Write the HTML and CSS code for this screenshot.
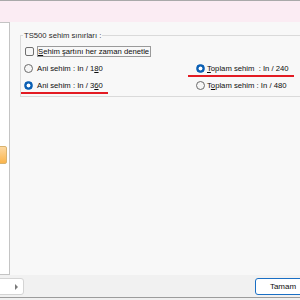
FILE: index.html
```html
<!DOCTYPE html>
<html lang="tr">

<head>
    <meta charset="UTF-8">
    <meta name="viewport" content="width=device-width, initial-scale=1.0">
    <title>TS500 sehim sınırları</title>
    <link rel="stylesheet" href="styles.css">
</head>

<body>

    <div class="top-line"></div>
    <div class="title-band"></div>

    <div class="main">
        <div class="side-panel">
            <div class="side-button"></div>
        </div>

        <div class="content">
            <!-- Deflection limits group -->
            <fieldset class="group">
                <legend>TS500 sehim sınırları :</legend>
                <div class="options">
                    <label class="check-row">
                        <span class="checkbox"></span>
                        <span class="focus-box"><u>S</u>ehim şartını her zaman denetle</span>
                    </label>
                    <label class="option">
                        <span class="radio"></span>
                        <span>Ani sehim : In / 1<u>8</u>0</span>
                    </label>
                    <label class="option right marked mark-right">
                        <span class="radio checked"></span>
                        <span><u>T</u>oplam sehim&nbsp; : In / 240</span>
                    </label>
                    <label class="option marked mark-left">
                        <span class="radio checked"></span>
                        <span>Ani sehim : In / 3<u>6</u>0</span>
                    </label>
                    <label class="option right">
                        <span class="radio"></span>
                        <span>T<u>o</u>plam sehim : In / 480</span>
                    </label>
                </div>
            </fieldset>
        </div>
    </div>

    <div class="footer">
        <div class="nav-box"><span class="arrow"></span></div>
        <button class="ok-button">Tamam</button>
    </div>
    <div class="bottom-line"></div>

</body>

</html>
```

FILE: styles.css
```css
* {
    margin: 0;
    padding: 0;
    box-sizing: border-box;
    font-family: "Liberation Sans", Arial, sans-serif;
}

body {
    width: 300px;
    height: 300px;
    overflow: hidden;
    background: #f0f0f0;
    color: #0d0d0d;
    font-size: 7.7px;
}

.top-line {
    height: 1px;
    background: #a9a9a9;
}

.title-band {
    height: 21px;
    background: #fbecf3;
}

.main {
    display: flex;
    height: 253px;
    background: #f8f8f8;
}

.side-panel {
    width: 10px;
    background: #fff;
    border: 1px solid #c4c4c4;
    border-left: none;
    padding-top: 123px;
}

.side-button {
    width: 11px;
    height: 18px;
    margin-left: -4px;
    border: 1px solid #d9b36f;
    border-radius: 2px;
    background: linear-gradient(#fdd9a2, #fbb54c);
}

.content {
    flex: 1;
    padding: 9px 0 0 10px;
}

.group {
    border: 1px solid #dadada;
    margin-right: -12px;
    padding: 0 0 2px 3px;
}

.group legend {
    line-height: 9px;
    padding: 0 1px;
    margin-left: -1px;
    color: #2a2a2a;
}

.options {
    display: grid;
    grid-template-columns: 172px 1fr;
    grid-auto-rows: 17px;
    padding-top: 3px;
    line-height: 9px;
}

.check-row {
    grid-column: 1 / -1;
    display: flex;
    align-items: center;
    gap: 3px;
    padding-left: 1px;
}

.checkbox {
    width: 9px;
    height: 9px;
    border: 1px solid #6f6f6f;
    border-radius: 2px;
    background: #f6f6f6;
}

.focus-box {
    border: 1px solid #9a9a9a;
    padding: 0 1px 0 0;
}

.option {
    position: relative;
    justify-self: start;
    display: flex;
    align-items: center;
    gap: 4px;
}

.option.right {
    gap: 2px;
}

.radio {
    width: 9px;
    height: 9px;
    flex-shrink: 0;
    border-radius: 50%;
    border: 1px solid #6b6b6b;
    background: #f6f6f6;
}

.radio.checked {
    border-color: #0a5fb4;
    background: radial-gradient(circle, #fff 0 1.6px, #0a5fb4 2.3px);
}

/* red marks drawn over the picked options */
.marked::after {
    content: "";
    position: absolute;
    bottom: 0;
    height: 2px;
    background: #e31b23;
}

.mark-right::after {
    left: -8px;
    right: -5px;
}

.mark-left::after {
    left: -3px;
    right: -5px;
}

.footer {
    height: 22px;
    display: flex;
    justify-content: space-between;
    align-items: flex-start;
    padding-top: 3px;
    background: #f1f1f1;
}

.nav-box {
    width: 28px;
    height: 17px;
    margin-left: -4px;
    display: flex;
    align-items: center;
    justify-content: flex-end;
    padding-right: 5px;
    background: #fff;
    border: 1px solid #d4d4d4;
    border-radius: 3px;
}

.arrow {
    border-left: 3px solid #7a7a7a;
    border-top: 3px solid transparent;
    border-bottom: 3px solid transparent;
}

.ok-button {
    width: 56px;
    height: 17px;
    margin-right: -11px;
    border: 1px solid #1a6fc4;
    border-radius: 3px;
    background: #fff;
    color: #0d0d0d;
    font-size: 8px;
}

.bottom-line {
    height: 1px;
    background: #9c9c9c;
}
```
